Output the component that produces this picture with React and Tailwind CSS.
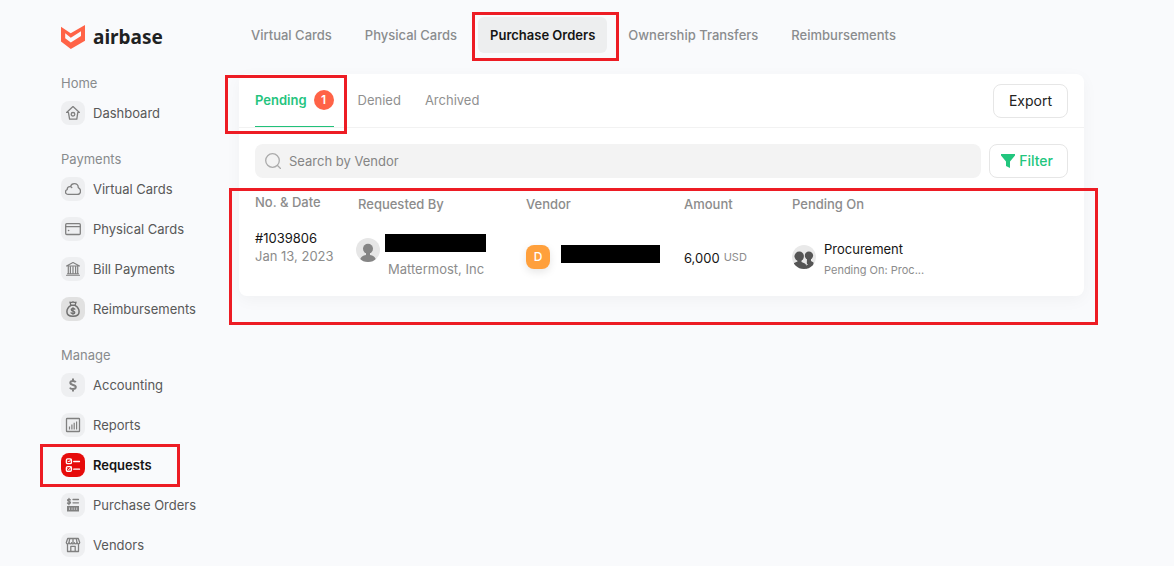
import React from "react";

const stroke = { fill: "none", stroke: "currentColor", strokeWidth: 1.3, strokeLinecap: "round", strokeLinejoin: "round" };

function Icon({ children }) {
  return (
    <svg viewBox="0 0 16 16" className="size-4" aria-hidden="true" {...stroke}>
      {children}
    </svg>
  );
}

const HomeIcon = () => (
  <Icon>
    <path d="M1.6 7.4 8 1.6l6.4 5.8H12.8l-1 6.8H4.6L3.4 7.4z" />
    <circle cx="8" cy="9.3" r="1.8" />
  </Icon>
);
const CloudIcon = () => (
  <Icon>
    <path d="M3.2 13.3c-1.6 0-2.7-1-2.7-2.4 0-1.2.7-2 1.7-2.3C2.2 6.7 3.3 5.6 4.8 5.6c.2 0 .5 0 .7.1C6 3.9 7.4 2.7 9.3 2.7c2.3 0 3.9 1.6 4 3.9 1.3.6 2.2 1.9 2.2 3.4 0 1.9-1.4 3.3-3.3 3.3zM5.5 5.7c.6.2 1 .5 1.3.9" />
  </Icon>
);
const CardIcon = () => (
  <Icon>
    <rect x=".7" y="2.7" width="14.6" height="10.8" rx="1" />
    <path d="M.7 5.7h14.6" />
    <path d="M3.5 9.5h.2" strokeWidth="1.5" />
  </Icon>
);
const BankIcon = () => (
  <Icon>
    <path d="M1.5 5 8 1.5 14.5 5zM1.5 14.3h13M2.5 12.7h11" strokeWidth="1.1" />
    <path d="M3.3 5.5v7M5.4 5.5v7M8 5.5v7M10.6 5.5v7M12.7 5.5v7" strokeWidth="1.2" />
  </Icon>
);
const MoneyBagIcon = () => (
  <Icon>
    <path d="M5 1.2c1 .6 2 .2 3-.3 1 .5 2 .9 3 .3l-.9 2.9H5.9zM5.5 4.3h5" />
    <path d="M5.7 4.6C3.2 6.1 1.9 8.3 1.9 10.7c0 3 2.3 4.5 6.1 4.5s6.1-1.5 6.1-4.5c0-2.4-1.3-4.6-3.8-6.1" strokeWidth="1.5" />
    <path d="M9.8 8.2C9.4 7.7 8.8 7.5 8 7.5c-1 0-1.7.5-1.7 1.2 0 1.9 3.5.8 3.5 2.7 0 .7-.8 1.2-1.8 1.2-.8 0-1.5-.3-1.9-.8M8 6.7v6.6" />
  </Icon>
);
const DollarIcon = () => (
  <Icon>
    <path d="M10.7 5.2C10.2 4.3 9.2 3.9 7.9 3.9c-1.5 0-2.6.7-2.6 1.9 0 2.9 5.5 1.3 5.5 4.3 0 1.3-1.2 2-2.9 2-1.4 0-2.5-.5-3-1.5M8 1.5v2.4M8 12.1v2.4" strokeWidth="2" strokeLinecap="butt" />
  </Icon>
);
const ChartIcon = () => (
  <Icon>
    <rect x="1.5" y="1.5" width="13" height="13" rx=".6" />
    <path d="M4.5 9.5v3M6.9 7.5v5M9.2 5.8v6.7M11.6 4.5v8" strokeWidth="1.2" strokeLinecap="butt" />
  </Icon>
);
const ChecklistIcon = () => (
  <Icon>
    <rect x="1.4" y="1.9" width="5" height="4.7" rx="1.2" strokeWidth="1.4" />
    <rect x="1.4" y="9.6" width="5" height="4.7" rx="1.2" strokeWidth="1.4" />
    <path d="m3 4.2.8.8 2.4-2.8M3 11.9l.8.8 2.4-2.8" strokeWidth="1" />
    <path d="M8.7 4.5h5.8M8.7 12.2h5.8" strokeWidth="1.3" />
  </Icon>
);
const OrderIcon = () => (
  <Icon>
    <path d="M5.4 2.9C5.1 2.5 4.7 2.3 4 2.3c-.8 0-1.4.4-1.4 1 0 1.5 2.9.7 2.9 2.2 0 .7-.6 1.1-1.5 1.1-.7 0-1.2-.2-1.5-.6M4 1.3v6.4" />
    <path d="M8 2.5h5.5M8 5.8h5.5" />
    <path d="M2 9h12v5.5H2z" fill="currentColor" stroke="none" />
    <path d="M4.5 10.5v2.5M7 10.5v2.5M9.3 10.5v2.5M11.7 10.5v2.5" stroke="#eeeff1" strokeWidth=".6" strokeLinecap="butt" />
  </Icon>
);
const StoreIcon = () => (
  <Icon>
    <path d="M2.7 1.5h10.6l1.4 4c0 .9-.7 1.4-1.4 1.4s-1.3-.5-1.3-1.3c0 .8-.6 1.3-1.3 1.3s-1.4-.5-1.4-1.3c0 .8-.6 1.3-1.3 1.3s-1.4-.5-1.4-1.3c0 .8-.6 1.3-1.3 1.3S4 6.400 4 5.600c0 .8-.6 1.3-1.3 1.3S1.3 6.400 1.3 5.500z" />
    <path d="M2.5 7.5v7h11v-7M5.800 14.5V9.300h4.400v5.200M4.700 1.700 4 5.500M8 1.700v3.800M11.300 1.700l.7 3.800" />
  </Icon>
);

const sections = [
  { title: "Home", items: [{ label: "Dashboard", icon: HomeIcon }] },
  {
    title: "Payments",
    items: [
      { label: "Virtual Cards", icon: CloudIcon },
      { label: "Physical Cards", icon: CardIcon },
      { label: "Bill Payments", icon: BankIcon },
      { label: "Reimbursements", icon: MoneyBagIcon, tone: "bg-[#e1e1e1] text-[#707070]" },
    ],
  },
  {
    title: "Manage",
    items: [
      { label: "Accounting", icon: DollarIcon },
      { label: "Reports", icon: ChartIcon },
      { label: "Requests", icon: ChecklistIcon, active: true, tone: "bg-[#e60b0b] text-white" },
      { label: "Purchase Orders", icon: OrderIcon },
      { label: "Vendors", icon: StoreIcon },
    ],
  },
];

const topTabs = ["Virtual Cards", "Physical Cards", "Purchase Orders", "Ownership Transfers", "Reimbursements"];

function Highlight({ className }) {
  return <span aria-hidden="true" className={`pointer-events-none absolute z-10 border-3 border-[#ed1c24] ${className}`} />;
}

function Sidebar() {
  return (
    <aside className="w-[178px] shrink-0 pt-6">
      <a href="#" className="flex h-[25px] items-center gap-2">
        <svg viewBox="0 0 24 25" className="h-[25px] w-6" fill="#ff6347" aria-hidden="true">
          <path fillRule="evenodd" d="M0 2.7 9.7 9.3 24 .9v15.800L9.800 25 0 17.400zM4.200 9.300v4.900l5.600 4.300 10.200-6.400V7.200L9.800 13.700z" />
        </svg>
        <span className="font-['Noto_Sans'] text-[19px] leading-6 font-bold text-[#1f2222]">airbase</span>
      </a>
      <nav className="mt-6 flex flex-col gap-6" aria-label="Main">
        {sections.map((s) => (
          <section key={s.title} className="flex flex-col gap-2">
            <h2 className="leading-5 text-[#888b8d]">{s.title}</h2>
            <ul className="flex flex-col gap-4">
              {s.items.map(({ label, icon: Glyph, active, tone }) => (
                <li key={label} className="relative flex">
                  <a href="#" className={`flex items-center gap-2 ${active ? "font-semibold text-[#151515]" : "text-[#585858]"}`}>
                    <span className={`grid size-6 place-items-center rounded-lg ${tone || "bg-[#eeeff1] text-[#808080]"}`}>
                      <Glyph />
                    </span>
                    {label}
                  </a>
                  {active && <Highlight className="-top-[9px] -bottom-2.5 -left-[21px] w-[140px]" />}
                </li>
              ))}
            </ul>
          </section>
        ))}
      </nav>
    </aside>
  );
}

function TopTabs() {
  return (
    <nav className="flex gap-[9px] pt-[17px]" aria-label="Request types">
      {topTabs.map((t) =>
        t === "Purchase Orders" ? (
          <a key={t} href="#" aria-current="page" className="relative rounded-md bg-[#edeeef] px-3 py-2 font-semibold whitespace-nowrap text-[#151515]">
            {t}
            <Highlight className="-top-[5px] -right-3 -bottom-2 -left-1.5" />
          </a>
        ) : (
          <a key={t} href="#" className="px-3 py-2 font-medium whitespace-nowrap text-[#8a8c8e]">
            {t}
          </a>
        )
      )}
    </nav>
  );
}

function StatusTabs() {
  return (
    <div className="flex items-start justify-between border-b border-[#f2f2f2] px-4">
      <div className="flex gap-6 text-[#909090]">
        <button type="button" className="relative flex items-center gap-[7px] border-b border-[#21c17a] py-4 font-semibold text-[#24c47e]">
          Pending
          <span className="grid size-5 place-items-center rounded-full bg-[#ff6347] text-[12px] leading-4 text-white">1</span>
          <Highlight className="top-px -right-[13px] -bottom-2 -left-[30px]" />
        </button>
        <button type="button" className="border-b border-transparent py-4">Denied</button>
        <button type="button" className="border-b border-transparent py-4">Archived</button>
      </div>
      <button type="button" className="mt-2.5 h-[34px] rounded-lg border border-[#e6e6e6] px-[15px] text-[14px] text-[#222]">Export</button>
    </div>
  );
}

function SearchBar() {
  return (
    <div className="flex gap-2 px-4 pt-4">
      <label className="flex h-[34px] flex-1 items-center gap-2 rounded-lg bg-[#f3f3f3] px-2.5">
        <svg viewBox="0 0 16 16" className="size-4 text-[#ababab]" aria-hidden="true" {...stroke}>
          <circle cx="7.5" cy="7.5" r="6.8" />
          <path d="m12.5 12.5 3 3" />
        </svg>
        <input type="search" aria-label="Search by Vendor" placeholder="Search by Vendor" className="min-w-0 flex-1 bg-transparent text-[#222] outline-none placeholder:text-[#858585]" />
      </label>
      <button type="button" className="flex h-[34px] items-center gap-1 rounded-lg border border-[#e6e6e6] pr-3.5 pl-[11px] text-[14px] font-medium text-[#22c67e]">
        <svg viewBox="0 0 14 14" className="size-3.5" fill="currentColor" aria-hidden="true">
          <path d="M0 0h14v1.6L9 7.5V14l-4-2V7.5L0 1.6z" />
        </svg>
        Filter
      </button>
    </div>
  );
}

function PersonAvatar() {
  return (
    <svg viewBox="0 0 24 24" className="size-6 shrink-0" role="img" aria-label="Requester">
      <clipPath id="person"><circle cx="12" cy="12" r="12" /></clipPath>
      <circle cx="12" cy="12" r="12" fill="#e6e6e6" />
      <g clipPath="url(#person)" fill="#858585">
        <circle cx="12" cy="10.7" r="5" />
        <path d="M10 14h4v3c3 .5 5.500 2 6 5v2H4v-2c.5-3 3-4.500 6-5z" />
      </g>
    </svg>
  );
}

function GroupAvatar() {
  return (
    <svg viewBox="0 0 24 24" className="size-6 shrink-0" role="img" aria-label="Group">
      <clipPath id="group"><circle cx="12" cy="12" r="12" /></clipPath>
      <circle cx="12" cy="12" r="12" fill="#e9e9e9" />
      <g clipPath="url(#group)" fill="#555">
        <circle cx="16.9" cy="10.6" r="4.2" />
        <path d="M15 13.500h4v2.500l2.500 1.500V22l-7 3z" />
        <circle cx="7.3" cy="11.3" r="4.8" />
        <path d="M5.500 14h4v3l3.500 1.500 2 2.500v3H2v-6l3.500-1.500z" />
      </g>
      <path d="m12.200 16.200 3.500 3.600M12.300 9v5" stroke="#e9e9e9" strokeWidth=".8" fill="none" />
    </svg>
  );
}

function RequestsTable() {
  return (
    <div className="relative px-4 pt-3.5">
      <table className="w-full table-fixed text-left">
        <colgroup>
          <col className="w-[103px]" />
          <col className="w-[168px]" />
          <col className="w-[158px]" />
          <col className="w-[108px]" />
          <col />
        </colgroup>
        <thead>
          <tr className="h-[22px] text-[#8c8c8c]">
            <th className="p-0 align-top font-medium">No. &amp; Date</th>
            <th className="p-0 align-bottom font-medium">Requested By</th>
            <th className="p-0 align-bottom font-medium">Vendor</th>
            <th className="p-0 align-bottom font-medium">Amount</th>
            <th className="p-0 align-bottom font-medium">Pending On</th>
          </tr>
        </thead>
        <tbody>
          <tr className="h-[82px]">
            <td className="px-0 pt-[15px] align-top leading-[18px]">
              <div className="text-[#151515]">#1039806</div>
              <div className="text-[#8c8c8c]">Jan 13, 2023</div>
            </td>
            <td className="px-0 pt-5 align-top">
              <div className="-ml-0.5 flex items-start gap-[5px]">
                <div className="pt-1"><PersonAvatar /></div>
                <div>
                  <div className="h-[18px] w-[101px] bg-black" />
                  <div className="pt-[7px] pl-[3px] text-[#8c8c8c]">Mattermost, Inc</div>
                </div>
              </div>
            </td>
            <td className="px-0 pt-[31px] align-top">
              <div className="flex items-start gap-[11px]">
                <span className="grid size-6 place-items-center rounded-lg bg-[#ffa03c] text-[12px] leading-4 font-medium text-white shadow-[0_3px_8px_rgba(0,0,0,0.1)]">D</span>
                <div className="h-[18px] w-[99px] bg-black" />
              </div>
            </td>
            <td className="px-0 pt-[33px] align-top">
              <div className="flex items-start gap-1 leading-[22px] text-[#151515]">
                6,000 <span className="text-[11px] leading-5 text-[#8c8c8c]">USD</span>
              </div>
            </td>
            <td className="px-0 pt-[25px] align-top">
              <div className="flex gap-2">
                <div className="pt-1.5"><GroupAvatar /></div>
                <div>
                  <div className="text-[#151515]">Procurement</div>
                  <div className="text-[11px] leading-[22px] text-[#8c8c8c]">Pending On: Proc...</div>
                </div>
              </div>
            </td>
          </tr>
        </tbody>
      </table>
      <Highlight className="top-2.5 -right-3.5 -bottom-[29px] -left-2.5" />
    </div>
  );
}

export default function App() {
  return (
    <div className="flex min-h-screen bg-[#f9fafc] pr-[90px] pl-[61px] font-['Inter',sans-serif] text-[13px] leading-5">
      <Sidebar />
      <main className="min-w-0 flex-1">
        <TopTabs />
        <div className="mt-[21px] rounded-lg bg-white shadow-[0_4px_16px_rgba(0,0,0,0.04)]">
          <StatusTabs />
          <SearchBar />
          <RequestsTable />
        </div>
      </main>
    </div>
  );
}
